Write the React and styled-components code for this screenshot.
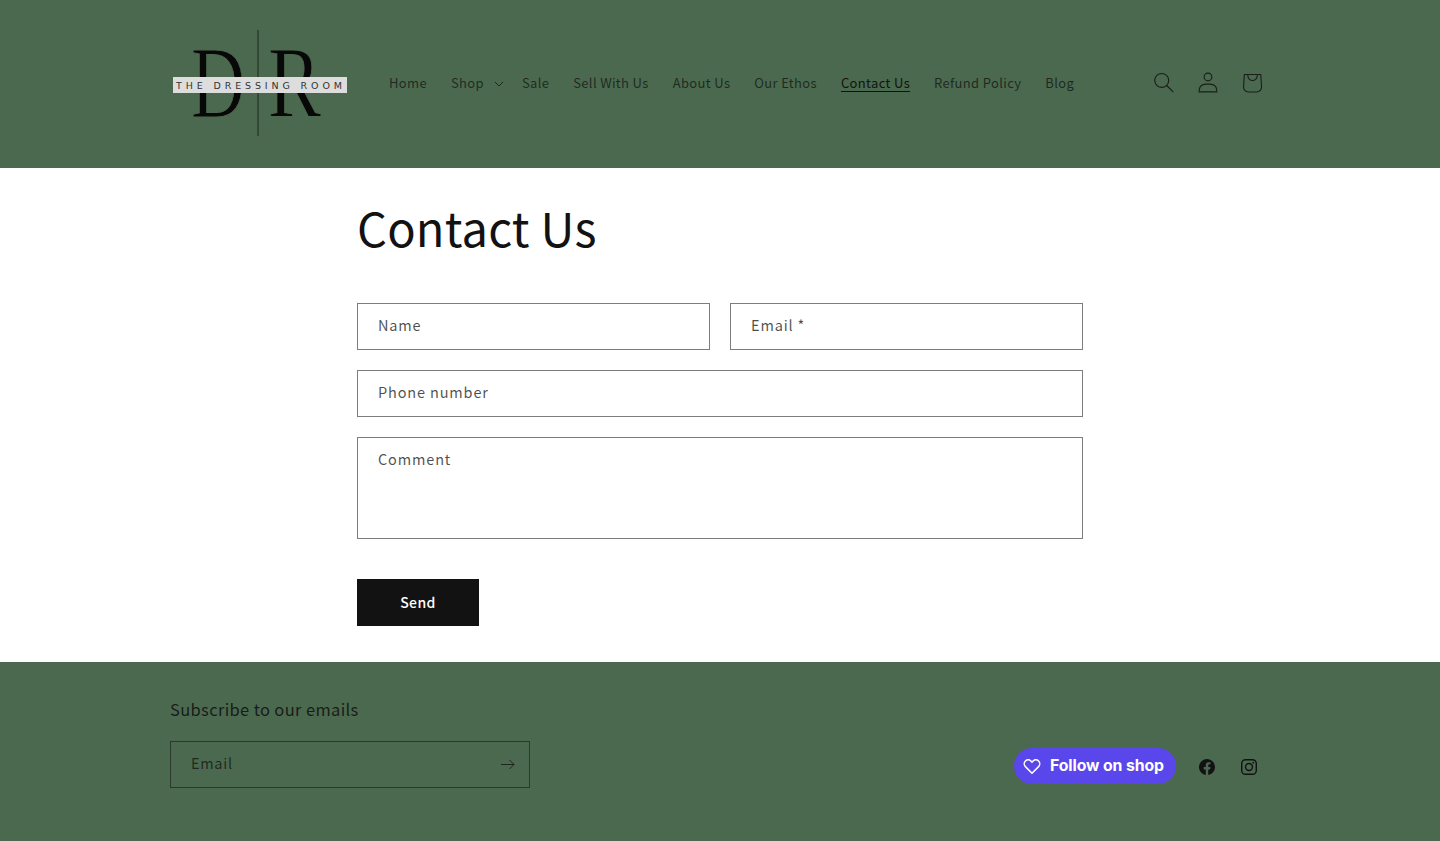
import React from "react";
import styled, { createGlobalStyle } from "styled-components";

const GlobalStyle = createGlobalStyle`
  html, body { margin: 0; padding: 0; background: #fff; }
  body { font-family: "Noto Sans CJK JP", "Noto Sans", sans-serif; color: #121212; }
  * { box-sizing: border-box; }
`;

const GREEN = "#4b694e";
const Page = styled.div`width: 1440px; height: 841px; overflow: hidden; display: flex; flex-direction: column;`;

const Header = styled.header`
  height: 168px; background: ${GREEN}; padding: 0 170px;
  display: flex; align-items: center;
`;
const LogoLink = styled.a`display: block; width: 180px; height: 110px; flex: none; margin-top: 2px;`;
const Nav = styled.nav`display: flex; align-items: center; margin-left: 27px; margin-top: -3px;`;
const NavItem = styled.a`
  font-size: 13px; line-height: 24px; letter-spacing: 0.34px; padding: 12px;
  color: ${p => p.$active ? "#121212" : "rgba(18,18,18,.75)"};
  display: flex; align-items: center; white-space: nowrap;
  span { text-decoration: ${p => p.$active ? "underline" : "none"}; text-underline-offset: 3px; }
`;
const Caret = styled.svg`width: 10px; height: 6px; margin-left: 10px; margin-right: -6px; margin-top: 2px;`;
const IconBar = styled.div`display: flex; margin-left: auto; margin-right: -4px; margin-top: -3px;`;
const IconButton = styled.a`
  width: 44px; height: 44px; display: flex; align-items: center; justify-content: center;
  color: #121212; opacity: .85;
`;

const Main = styled.main`flex: none; height: 494px; width: 726px; margin: 0 auto; padding-top: 28px;`;
const Title = styled.h1`font-size: 47px; line-height: 62px; font-weight: 400; margin: 0 0 45px; letter-spacing: 0.2px; color: #121212;`;
const Form = styled.form`display: grid; grid-template-columns: 1fr 1fr; gap: 20px;`;
const Field = styled.div`
  grid-column: ${p => p.$wide ? "1 / -1" : "auto"};
  height: ${p => p.$tall ? "102px" : "47px"};
  border: 1px solid rgba(18,18,18,.55);
  padding: ${p => p.$tall ? "9px 20px" : "0 20px 4px"};
  display: flex; align-items: ${p => p.$tall ? "flex-start" : "center"};
  font-size: 14.5px; line-height: 24px; letter-spacing: 0.85px; color: rgba(18,18,18,.75);
`;
const SendButton = styled.button`
  display: block; margin-top: 40px; width: 122px; height: 47px; border: 0; background: #121212; color: #fff;
  font: 500 14px/24px "Noto Sans CJK JP", sans-serif; letter-spacing: 0.4px; padding: 0 0 1px;
`;

const Footer = styled.footer`flex: 1; background: ${GREEN}; padding: 33px 170px 0; display: flex; justify-content: space-between;`;
const Newsletter = styled.div`width: 360px;`;
const NewsTitle = styled.h2`font-size: 16.5px; line-height: 28px; font-weight: 400; letter-spacing: 0.35px; margin: 0 0 18px; color: rgba(18,18,18,.9);`;
const EmailBox = styled.div`
  height: 47px; border: 1px solid rgba(18,18,18,.55); display: flex; align-items: center; justify-content: space-between;
  padding: 0 14px 0 20px; font-size: 14.5px; letter-spacing: 0.7px; color: rgba(18,18,18,.75);
  span { margin-top: -4px; }
`;
const Social = styled.div`display: flex; align-items: center; margin-top: 53px; height: 36px;`;
const ShopButton = styled.a`
  width: 162px; height: 36px; border-radius: 18px; background: #5a47eb; color: #fff;
  display: flex; align-items: center; padding-left: 9px; gap: 9px; margin-right: 10px;
  font: 700 15.8px/36px Inter, sans-serif; letter-spacing: -0.1px; white-space: nowrap;
`;
const SocialLink = styled.a`width: 42px; height: 42px; padding-top: 2px; display: flex; align-items: center; justify-content: center; color: #121212;`;

const Logo = () => (
  <svg width="180" height="110" viewBox="0 0 180 110" overflow="visible">
    <text x="21" y="87" fontFamily="Liberation Serif" fontSize="101" fill="#080808" stroke={GREEN} strokeWidth="0.9" textLength="54" lengthAdjust="spacingAndGlyphs">D</text>
    <text x="98" y="87" fontFamily="Liberation Serif" fontSize="101" fill="#080808" stroke={GREEN} strokeWidth="0.9" textLength="53" lengthAdjust="spacingAndGlyphs">R</text>
    <rect x="87.5" y="0" width="1" height="106" fill="#1d2a1f" />
    <rect x="3" y="47" width="174" height="16" fill="#dddddd" />
    <text x="6" y="59" fontFamily="DejaVu Sans" fontSize="9.5" fill="#333" textLength="166" lengthAdjust="spacing">THE DRESSING ROOM</text>
  </svg>
);

const items = ["Home", "Shop", "Sale", "Sell With Us", "About Us", "Our Ethos", "Contact Us", "Refund Policy", "Blog"];

export default function App() {
  return (
    <Page>
      <GlobalStyle />
      <Header>
        <LogoLink><Logo /></LogoLink>
        <Nav>
          {items.map(t => (
            <NavItem key={t} $active={t === "Contact Us"}>
              <span>{t}</span>
              {t === "Shop" && (
                <Caret viewBox="0 0 10 6"><path d="M.9.9 5 5l4.1-4.1" fill="none" stroke="currentColor" strokeWidth="1" /></Caret>
              )}
            </NavItem>
          ))}
        </Nav>
        <IconBar>
          <IconButton>
            <svg width="20" height="21" viewBox="0 0 18 19" fill="currentColor"><path fillRule="evenodd" d="M11.03 11.68A5.784 5.784 0 112.85 3.5a5.784 5.784 0 018.18 8.18zm.26 1.12a6.78 6.78 0 11.72-.7l5.4 5.4a.5.5 0 11-.71.7l-5.41-5.4z" /></svg>
          </IconButton>
          <IconButton>
            <svg width="20" height="21" viewBox="0 0 18 19" fill="currentColor"><path fillRule="evenodd" d="M6 4.5a3 3 0 1 1 6 0 3 3 0 0 1-6 0m3-4a4 4 0 1 0 0 8 4 4 0 0 0 0-8m5.58 12.15c1.12.82 1.83 2.24 1.91 4.85H1.51c.08-2.6.79-4.03 1.9-4.85C4.66 11.75 6.5 11.5 9 11.5s4.35.26 5.58 1.15M9 10.5c-2.5 0-4.65.24-6.17 1.35C1.27 12.98.5 14.93.5 18v.5h17V18c0-3.07-.77-5.02-2.33-6.15-1.52-1.1-3.67-1.35-6.17-1.35" /></svg>
          </IconButton>
          <IconButton>
            <svg width="44" height="44" viewBox="0 0 40 40" fill="currentColor"><path fillRule="evenodd" d="M15.75 11.8h-3.16l-.77 11.6a5 5 0 0 0 4.99 5.34h7.38a5 5 0 0 0 4.99-5.33L28.4 11.8zm0 1h-2.22l-.71 10.67a4 4 0 0 0 3.99 4.27h7.38a4 4 0 0 0 4-4.27l-.72-10.67h-2.22v.63a4.75 4.75 0 1 1-9.5 0zm8.5 0h-7.5v.63a3.75 3.75 0 1 0 7.5 0z" /></svg>
          </IconButton>
        </IconBar>
      </Header>
      <Main>
        <Title>Contact Us</Title>
        <Form>
          <Field>Name</Field>
          <Field>Email *</Field>
          <Field $wide>Phone number</Field>
          <Field $wide $tall>Comment</Field>
        </Form>
        <SendButton>Send</SendButton>
      </Main>
      <Footer>
        <Newsletter>
          <NewsTitle>Subscribe to our emails</NewsTitle>
          <EmailBox>
            <span>Email</span>
            <svg width="15" height="11" viewBox="0 0 15 11" fill="none" stroke="currentColor" strokeWidth="1"><path d="M1 5.5h13M9.5 1l4.5 4.5L9.5 10" /></svg>
          </EmailBox>
        </Newsletter>
        <Social>
          <ShopButton>
            <svg width="18" height="17" viewBox="0 0 18 17" fill="none" stroke="#fff" strokeWidth="1.5"><path d="M9 15.3 2.4 8.6a4 4 0 0 1 0-5.6 3.9 3.9 0 0 1 5.5 0L9 4.2 10.1 3a3.9 3.9 0 0 1 5.5 0 4 4 0 0 1 0 5.6z" /></svg>
            Follow on shop
          </ShopButton>
          <SocialLink>
            <svg width="16" height="16" viewBox="0 0 18 18" fill="currentColor"><path d="M18 9.05A9 9 0 1 0 7.6 18v-6.3H5.3V9.05h2.3V7.07c0-2.26 1.34-3.5 3.4-3.5.98 0 2 .17 2 .17v2.22h-1.13c-1.12 0-1.47.7-1.47 1.41v1.68h2.5l-.4 2.65h-2.1V18A9 9 0 0 0 18 9.05z" /></svg>
          </SocialLink>
          <SocialLink>
            <svg width="16" height="16" viewBox="0 0 18 18" fill="none" stroke="currentColor" strokeWidth="1.6"><rect x=".8" y=".8" width="16.4" height="16.4" rx="4.4" /><circle cx="9" cy="9" r="3.9" /><circle cx="13.8" cy="4.2" r="1" fill="currentColor" stroke="none" /></svg>
          </SocialLink>
        </Social>
      </Footer>
    </Page>
  );
}
